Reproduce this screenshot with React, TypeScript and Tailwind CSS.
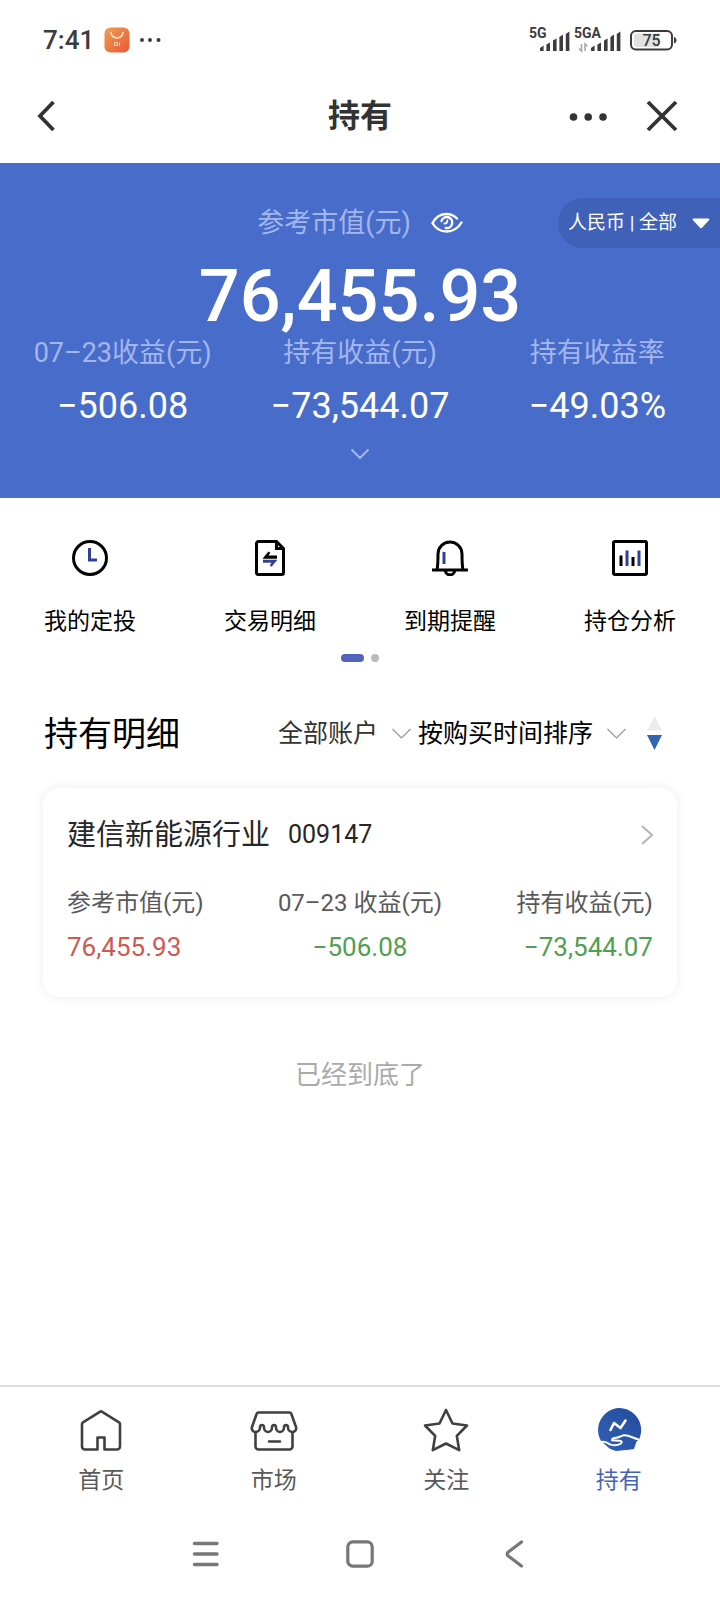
import type { ReactNode } from 'react';

const summary = [
  { label: '07–23收益(元)', value: '−506.08' },
  { label: '持有收益(元)', value: '−73,544.07' },
  { label: '持有收益率', value: '−49.03%' },
];

function SignalBars({ x }: { x: number }) {
  return (
    <g transform={`translate(${x} 0)`} fill="#3c3c3c">
      <path d="M0 25v-3l3.6-2.4V25zM6.4 25v-6.4l3.6-2V25zM13 25V14.600l3.600-2.200V25zM19.400 25V11l3.600-2.600V25zM25.800 25V8l3.600-2.400V25z" />
    </g>
  );
}

function StatusBar() {
  return (
    <div className="flex h-[72px] items-center justify-between pt-2 pr-[42px] pl-[43px]">
      <div className="flex items-center">
        <span className="text-[26px] leading-8 font-medium text-[#3c3c3c]">7:41</span>
        <svg className="ml-[10px]" width="26" height="26" viewBox="0 0 26 26" aria-hidden="true">
          <defs>
            <linearGradient id="bag" x1="0" y1="0" x2="1" y2="1">
              <stop offset="0" stopColor="#f0a050" />
              <stop offset="1" stopColor="#e8563a" />
            </linearGradient>
          </defs>
          <rect x="0.500" y="0.500" width="25" height="25" rx="6" fill="url(#bag)" />
          <path d="M7 5.500a6 5.500 0 0 0 12 0" fill="none" stroke="#fde9d8" strokeWidth="1.500" strokeLinecap="round" />
          <path d="M10.500 19v-3.500h3V19M12 17v2M15.500 15.500V19" fill="none" stroke="#fbd3b8" strokeWidth="1" />
        </svg>
        <svg className="ml-[8px]" width="24" height="6" viewBox="0 0 24 6" fill="#3c3c3c" aria-hidden="true">
          <circle cx="4" cy="3" r="2" />
          <circle cx="12" cy="3" r="2" />
          <circle cx="20.500" cy="3" r="2" />
        </svg>
      </div>
      <svg width="149" height="28" viewBox="0 0 149 28" aria-label="5G 5GA 75">
        <text x="0" y="12" fontSize="14" fontWeight="700" fill="#3c3c3c">5G</text>
        <SignalBars x={11} />
        <text x="45" y="12" fontSize="14" fontWeight="700" fill="#3c3c3c">5GA</text>
        <path d="M52.500 18v7l-2.500-2.500M56 25v-7l2.500 2.500" fill="none" stroke="#a8a8a8" strokeWidth="1.600" />
        <SignalBars x={62} />
        <rect x="102" y="5" width="41" height="18.500" rx="5" fill="none" stroke="#3c3c3c" strokeWidth="2" />
        <path d="M108 7.500h22v13.500h-22a3 3 0 0 1-3-3v-7.500a3 3 0 0 1 3-3z" fill="#e2e2e2" />
        <path d="M145.500 11.500c2 .5 2 5 0 5.500z" fill="#3c3c3c" stroke="#3c3c3c" strokeWidth="1" />
        <text x="122.500" y="20" fontSize="16" fontWeight="500" fill="#3c3c3c" textAnchor="middle">75</text>
      </svg>
    </div>
  );
}

function Header() {
  return (
    <header className="grid h-[91px] grid-cols-[1fr_auto_1fr] items-center px-[36px] pb-[3px]">
      <button type="button" aria-label="返回" className="justify-self-start">
        <svg width="20" height="32" viewBox="0 0 20 32" fill="none" stroke="#333" strokeWidth="3.800">
          <path d="M17.500 2 4 16l13.500 14" />
        </svg>
      </button>
      <h1 className="text-[32px] leading-10 font-bold text-[#333]">持有</h1>
      <div className="flex items-center gap-[38px] justify-self-end">
        <button type="button" aria-label="更多">
          <svg width="40" height="32" viewBox="0 0 40 32" fill="#333">
            <circle cx="5.500" cy="17" r="3.800" />
            <circle cx="20.200" cy="17" r="3.800" />
            <circle cx="35" cy="17" r="3.800" />
          </svg>
        </button>
        <button type="button" aria-label="关闭">
          <svg width="38" height="32" viewBox="0 0 38 32" fill="none" stroke="#333" strokeWidth="3.800">
            <path d="m2 2 28 28M30 2 2 30" />
          </svg>
        </button>
      </div>
    </header>
  );
}

function Summary() {
  return (
    <section className="bg-[#486cca] pt-[35px] pb-[32px] text-white">
      <div className="grid grid-cols-[1fr_auto_1fr] items-center">
        <div className="col-start-2 flex items-center gap-[20px]">
          <span className="text-[27px] leading-9 text-[#a4b6ee]">参考市值(元)</span>
          <button type="button" aria-label="隐藏金额">
            <svg width="32" height="22" viewBox="0 0 32 22" fill="none" stroke="#fff" strokeWidth="2.400" strokeLinecap="round">
              <path d="M26 6.500C23 3.500 19.500 2 15.500 2 9.500 2 4.500 5.500 1.500 11c3 5.500 8 8.500 14 8.500 6.500 0 11.500-3.200 15-9" />
              <path d="M10.500 9a5.500 5.500 0 1 1 4.300 7" />
              <path d="M13.500 11.500a2.600 2.600 0 0 0 2.800-3.200" strokeWidth="1.800" />
            </svg>
          </button>
        </div>
        <div className="relative flex h-[50px] items-center justify-self-end rounded-l-full bg-[#4061b8]">
          <select aria-label="币种与账户范围" className="appearance-none bg-transparent pr-[42px] pl-[10px] text-[19px] leading-7 outline-none">
            <option>人民币 | 全部</option>
          </select>
          <svg className="pointer-events-none absolute right-[10px]" width="18" height="11" viewBox="0 0 18 11" aria-hidden="true">
            <path d="M1.500.5h15a1 1 0 0 1 .7 1.600L10 9.800a1.400 1.400 0 0 1-2 0L.8 2.100A1 1 0 0 1 1.500.5z" fill="#fff" />
          </svg>
        </div>
      </div>
      <p className="pt-3 text-center text-[72px] leading-[74px] font-medium">76,455.93</p>
      <dl className="mt-px grid grid-cols-3 px-1 text-center">
        {summary.map((item) => (
          <div key={item.label}>
            <dt className="text-[27px] leading-9 text-[#a4b6ee]">{item.label}</dt>
            <dd className="mt-[11px] text-[36px] leading-12">{item.value}</dd>
          </div>
        ))}
      </dl>
      <button type="button" aria-label="展开" className="mx-auto mt-3 flex h-6 items-center">
        <svg width="20" height="12" viewBox="0 0 20 12" fill="none" stroke="#a4b6ee" strokeWidth="2">
          <path d="m1.500 1.500 8.500 8.500 8.500-8.500" />
        </svg>
      </button>
    </section>
  );
}

function Action({ label, children }: { label: string; children: ReactNode }) {
  return (
    <button type="button" className="flex flex-col items-center gap-[30px]">
      <svg width="36" height="36" viewBox="0 0 36 36" fill="none" stroke="#000" strokeWidth="3" aria-hidden="true">
        {children}
      </svg>
      <span className="text-[23px] leading-8 text-black">{label}</span>
    </button>
  );
}

function Actions() {
  return (
    <nav aria-label="快捷功能" className="pt-[42px]">
      <div className="grid grid-cols-4">
        <Action label="我的定投">
          <circle cx="18" cy="18" r="16.500" />
          <path d="M17.500 8v12H25" stroke="#323f98" />
        </Action>
        <Action label="交易明细">
          <path d="M4.500 3.500v29a2 2 0 0 0 2 2h23a2 2 0 0 0 2-2V8.500l-7-7h-18a2 2 0 0 0-2 2z" />
          <path d="M24.500 2v6.500H31" />
          <path d="M10.500 18.700l6-7.200 1.800 1.200-1.800 2.800H25v3.200z" fill="#000" stroke="none" />
          <path d="M11 19.800v3h8.500l-1.800 2.600 1.800 1.400 6-7z" fill="#323f98" stroke="none" />
        </Action>
        <Action label="到期提醒">
          <path d="M0 30h36M5 30c1-5 1-9 1-16a12 12 0 0 1 24 0c0 7 0 11 1 16M13.500 31a4.500 3.800 0 0 0 9 0" />
          <path d="M12 12v12" stroke="#323f98" />
        </Action>
        <Action label="持仓分析">
          <rect x="1.500" y="1.500" width="33" height="33" rx="1.500" />
          <path d="M9 15.500V26M21 17v9" />
          <path d="M15 10.500V26M27 10.500V26" stroke="#323f98" />
        </Action>
      </div>
      <div className="mt-4 flex justify-center gap-[7px]">
        <span className="h-2 w-[23px] rounded-full bg-[#5263bb]" />
        <span className="size-2 rounded-full bg-[#bbb]" />
      </div>
    </nav>
  );
}

function Dropdown({ label, option, tone }: { label: string; option: string; tone: string }) {
  return (
    <div className="relative flex items-center">
      <select aria-label={label} className={`appearance-none bg-transparent pr-[32px] text-[25px] leading-9 outline-none ${tone}`}>
        <option>{option}</option>
      </select>
      <svg className="pointer-events-none absolute right-0" width="19" height="12" viewBox="0 0 19 12" fill="none" stroke="#999" strokeWidth="1.200" aria-hidden="true">
        <path d="m.5 1 9 9 9-9" />
      </svg>
    </div>
  );
}

function Holdings() {
  return (
    <section className="pt-[48px]">
      <div className="flex items-center justify-between pr-[58px] pl-[44px]">
        <h2 className="text-[34px] leading-12 text-black">持有明细</h2>
        <div className="flex items-center">
          <Dropdown label="账户" option="全部账户" tone="text-[#333]" />
          <div className="ml-[7px]">
            <Dropdown label="排序方式" option="按购买时间排序" tone="text-black" />
          </div>
          <button type="button" aria-label="切换排序方向" className="ml-[21px]">
            <svg width="15" height="36" viewBox="0 0 15 36">
              <path d="M7.500 0 15 14.500H0z" fill="#ececec" />
              <path d="M0 19h15L7.500 34z" fill="#2f66ad" />
            </svg>
          </button>
        </div>
      </div>
      <a href="#009147" className="mx-[43px] mt-[30px] block rounded-2xl bg-white px-6 pt-[25px] pb-[32px] shadow-[0_0_12px_rgba(0,0,0,0.08)]">
        <div className="flex items-center">
          <h3 className="text-[29px] leading-11 text-[#262626]">建信新能源行业</h3>
          <span className="ml-[18px] text-[25px] leading-11 text-[#262626]">009147</span>
          <svg className="ml-auto" width="12" height="20" viewBox="0 0 12 20" fill="none" stroke="#b3b3b8" strokeWidth="2" aria-hidden="true">
            <path d="m1 1 10 9-10 9" />
          </svg>
        </div>
        <dl className="mt-[28px] flex justify-between">
          <div>
            <dt className="text-[24px] leading-9 text-[#59595c]">参考市值(元)</dt>
            <dd className="mt-2 text-[26px] leading-9 text-[#cc5a50]">76,455.93</dd>
          </div>
          <div className="text-center">
            <dt className="text-[24px] leading-9 text-[#59595c]">07–23 收益(元)</dt>
            <dd className="mt-2 text-[26px] leading-9 text-[#50a050]">−506.08</dd>
          </div>
          <div className="text-right">
            <dt className="text-[24px] leading-9 text-[#59595c]">持有收益(元)</dt>
            <dd className="mt-2 text-[26px] leading-9 text-[#50a050]">−73,544.07</dd>
          </div>
        </dl>
      </a>
      <p className="mt-[60px] text-center text-[26px] leading-9 text-[#aaa]">已经到底了</p>
    </section>
  );
}

function Tab({ label, active, children }: { label: string; active?: boolean; children: ReactNode }) {
  return (
    <a href="#tab" aria-current={active ? 'page' : undefined} className="flex flex-col items-center gap-[11px]">
      <svg width="48" height="48" viewBox="0 0 48 48" fill="none" stroke="#404040" strokeWidth="2.600" strokeLinejoin="round" strokeLinecap="round" aria-hidden="true">
        {children}
      </svg>
      <span className={active ? 'text-[23px] leading-8 text-[#4464b8]' : 'text-[23px] leading-8 text-[#595959]'}>{label}</span>
    </a>
  );
}

function TabBar() {
  return (
    <nav aria-label="主导航" className="grid grid-cols-4 border-t-2 border-[#dedede] px-[15px] pt-[19px]">
      <Tab label="首页">
        <path d="M20.500 43.500H8a3 3 0 0 1-3-3V18a2 2 0 0 1 1-1.700L22.800 5.800a2.300 2.300 0 0 1 2.400 0L42 16.300a2 2 0 0 1 1 1.700v22.500a3 3 0 0 1-3 3H27.500v-12h-7z" />
      </Tab>
      <Tab label="市场">
        <path d="M8.500 6.500h31a2 2 0 0 1 1.800 1.200L46 21c.8 2.500-1 5-3.500 5s-4.500-2-4.500-4.500c0-1.500-.7-2.500-2-2.500s-2 1-2 2.500C34 24 32 26 30 26s-4-2-4-4.500c0-1.500-.7-2.500-2-2.500s-2 1-2 2.500c0 2.500-2 4.500-4 4.500s-4-2-4-4.500c0-1.500-.7-2.500-2-2.500s-2 1-2 2.500C10 24 8 26 5.500 26S1.200 23.500 2 21L6.700 7.700a2 2 0 0 1 1.800-1.200z" />
        <path d="M5.500 26.500v14a3 3 0 0 0 3 3h31a3 3 0 0 0 3-3v-14M19 35.500h11" />
      </Tab>
      <Tab label="关注">
        <path d="m24 4 6.500 13.500L45 19.500 34.800 29.800l2.400 14.400L24 37.500l-13.200 6.700 2.400-14.400L3 19.500l14.500-2z" />
      </Tab>
      <Tab label="持有" active>
        <defs>
          <linearGradient id="coin" x1="0" y1="1" x2="1" y2="0">
            <stop offset="0" stopColor="#3260b4" />
            <stop offset="1" stopColor="#234c9e" />
          </linearGradient>
        </defs>
        <path d="M24 2a22 22 0 0 1 20 31.500l-2.500 2L39 43l-5 .8L21 45l-6-2-9-8A22 22 0 0 1 24 2z" fill="url(#coin)" stroke="none" />
        <path d="m15.500 24 3.500-7 6.500 5 5-7.500" stroke="#fff" />
        <path d="M5 36.300c4-1.300 7 0 10 2 4 1.700 8 1 11-.8 1.500-1.500.5-2.800-1.500-2.800l-7.500-.4c0-2 2-2.600 4-2.600 3 .2 5-2 8-2.400 5-.2 9 2.700 14 4" stroke="#fff" strokeWidth="2" />
        <path d="M5 37.500c4 1 6 5 11 6.800" stroke="#fff" strokeWidth="1.400" />
      </Tab>
    </nav>
  );
}

function SystemNav() {
  return (
    <div className="flex h-[103px] items-center justify-center gap-[126px] pt-[10px]">
      <button type="button" aria-label="最近任务">
        <svg width="28" height="28" viewBox="0 0 28 28" stroke="#777" strokeWidth="3.400" strokeLinecap="round">
          <path d="M2.500 3.500h22.500M2.500 14h22.500M2.500 24.500h22.500" />
        </svg>
      </button>
      <button type="button" aria-label="主屏幕">
        <svg width="28" height="28" viewBox="0 0 28 28" fill="none" stroke="#777" strokeWidth="3.200">
          <rect x="1.800" y="1.800" width="24.400" height="24.400" rx="5" />
        </svg>
      </button>
      <button type="button" aria-label="系统返回">
        <svg width="28" height="28" viewBox="0 0 28 28" fill="none" stroke="#777" strokeWidth="3.200" strokeLinecap="round" strokeLinejoin="round">
          <path d="M21.500 2 8 12.300a2.200 2.200 0 0 0 0 3.400L21.500 26" />
        </svg>
      </button>
    </div>
  );
}

export default function App() {
  return (
    <div className="flex min-h-screen flex-col bg-white font-['Roboto','Noto_Sans_CJK_SC',sans-serif]">
      <StatusBar />
      <Header />
      <main className="flex-1">
        <Summary />
        <Actions />
        <Holdings />
      </main>
      <TabBar />
      <SystemNav />
    </div>
  );
}
